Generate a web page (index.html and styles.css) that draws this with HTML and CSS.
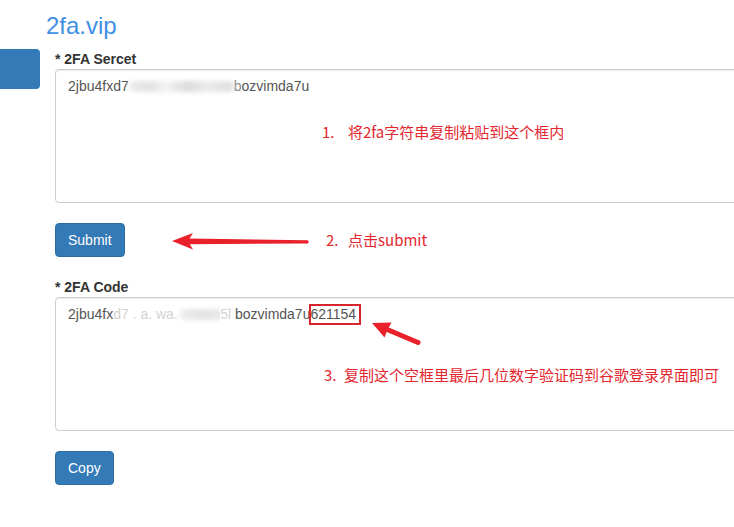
FILE: index.html
```html
<!DOCTYPE html>
<html lang="zh-CN">
<head>
<meta charset="utf-8">
<title>2fa.vip</title>
<link rel="stylesheet" href="styles.css">
</head>
<body>
<div class="page">
  <h1 class="brand">2fa.vip</h1>
  <div class="layout">
    <aside class="side"><div class="side-tab"></div></aside>
    <form class="form">
      <div class="group">
        <label class="label">* 2FA Sercet</label>
        <div class="field">2jbu4fxd7<span class="smudge smudge-a"></span><span class="covered">b</span>ozvimda7u</div>
      </div>
      <button type="button" class="btn">Submit</button>
      <div class="group">
        <label class="label">* 2FA Code</label>
        <div class="field">2jbu4fx<span class="mask"><span class="ghost">d7 . a. wa.</span><span class="smudge smudge-b"></span></span><span class="ghost">5l</span> bozvimda7u<span class="code">621154</span></div>
      </div>
      <button type="button" class="btn">Copy</button>
    </form>
  </div>

  <div class="note note-1"><span class="num num-1">1.</span>将2fa字符串复制粘贴到这个框内</div>
  <div class="note note-2"><span class="num num-2">2.</span>点击submit</div>
  <div class="note note-3"><span class="num num-3">3.</span>复制这个空框里最后几位数字验证码到谷歌登录界面即可</div>

  <svg class="arrows" width="734" height="527" viewBox="0 0 734 527">
    <polygon points="307,240.2 307,243.6 188,244.2 188,238.6" fill="#e8212b"/>
    <circle cx="307" cy="241.9" r="1.7" fill="#e8212b"/>
    <polygon points="172,241 193,233 188,241 193,249.5" fill="#e8212b"/>
    <line x1="418" y1="342.5" x2="386" y2="329" stroke="#e8212b" stroke-width="5" stroke-linecap="round"/>
    <polygon points="372,323 391.5,322.5 387.6,329.6 384.5,337.5" fill="#e8212b"/>
  </svg>
</div>
</body>
</html>
```

FILE: styles.css
```css
html, body {
  margin: 0;
  padding: 0;
  background: #fff;
}

.page {
  position: relative;
  width: 734px;
  height: 527px;
  overflow: hidden;
  font-family: "Liberation Sans", Arial, sans-serif;
  font-size: 14px;
  color: #333;
}

.brand {
  margin: 0 0 9px 0;
  padding: 12px 0 0 46px;
  font-size: 24px;
  line-height: 28px;
  font-weight: normal;
  color: #3f8fe3;
}

.layout {
  display: flex;
  align-items: flex-start;
}

.side {
  width: 40px;
  flex: none;
}

.side-tab {
  height: 40px;
  background: #337ab7;
  border-radius: 0 4px 4px 0;
}

.form {
  margin-left: 15px;
  width: 700px;
  flex: none;
  display: flex;
  flex-direction: column;
  align-items: flex-start;
}

.group {
  width: 100%;
}

.group + .btn,
.btn + .group {
  margin-top: 20px;
}

.label {
  display: block;
  font-weight: bold;
  line-height: 20px;
  color: #333;
}

.field {
  box-sizing: border-box;
  width: 100%;
  height: 134px;
  padding: 6px 12px;
  border: 1px solid #ccc;
  border-radius: 4px;
  box-shadow: inset 0 1px 1px rgba(0, 0, 0, 0.075);
  color: #555;
  line-height: 20px;
  white-space: nowrap;
}

.smudge {
  display: inline-block;
  height: 11px;
  vertical-align: -1px;
  border-radius: 5px;
  filter: blur(2px);
}

.smudge-a {
  width: 105px;
  background: linear-gradient(90deg, #ececec 0%, #e2e2e2 20%, #f3f3f3 35%, #dcdcdc 55%, #ebebeb 75%, #dedede 100%);
}

.mask {
  display: inline-block;
  width: 107px;
  height: 20px;
  overflow: hidden;
  vertical-align: top;
}

.smudge-b {
  width: 52px;
  margin-left: 2px;
  background: linear-gradient(90deg, #eeeeee 0%, #e3e3e3 40%, #e8e8e8 70%, #f2f2f2 100%);
}

.covered {
  color: #888;
}

.ghost {
  color: #d2d2d2;
}

.code {
  position: relative;
  color: #555;
}

.code::after {
  content: "";
  position: absolute;
  top: -2px;
  bottom: -3px;
  left: -1px;
  right: -5px;
  border: 2px solid #d6262d;
}

.btn {
  display: inline-block;
  margin: 0;
  padding: 6px 12px;
  border: 1px solid #2e6da4;
  border-radius: 4px;
  background: #337ab7;
  color: #fff;
  font-family: "Liberation Sans", Arial, sans-serif;
  font-size: 14px;
  line-height: 20px;
}

.note {
  position: absolute;
  font-family: "Noto Sans CJK SC", "Noto Sans", sans-serif;
  font-size: 15px;
  line-height: 20px;
  color: #e3262e;
  white-space: nowrap;
}

.num {
  display: inline-block;
}

.note-1 {
  left: 322px;
  top: 122px;
}

.num-1 { width: 26px; }

.note-2 {
  left: 326px;
  top: 230px;
}

.num-2 { width: 22px; }

.note-3 {
  left: 324px;
  top: 365px;
}

.num-3 { width: 20px; }

.arrows {
  position: absolute;
  left: 0;
  top: 0;
  pointer-events: none;
}
```
